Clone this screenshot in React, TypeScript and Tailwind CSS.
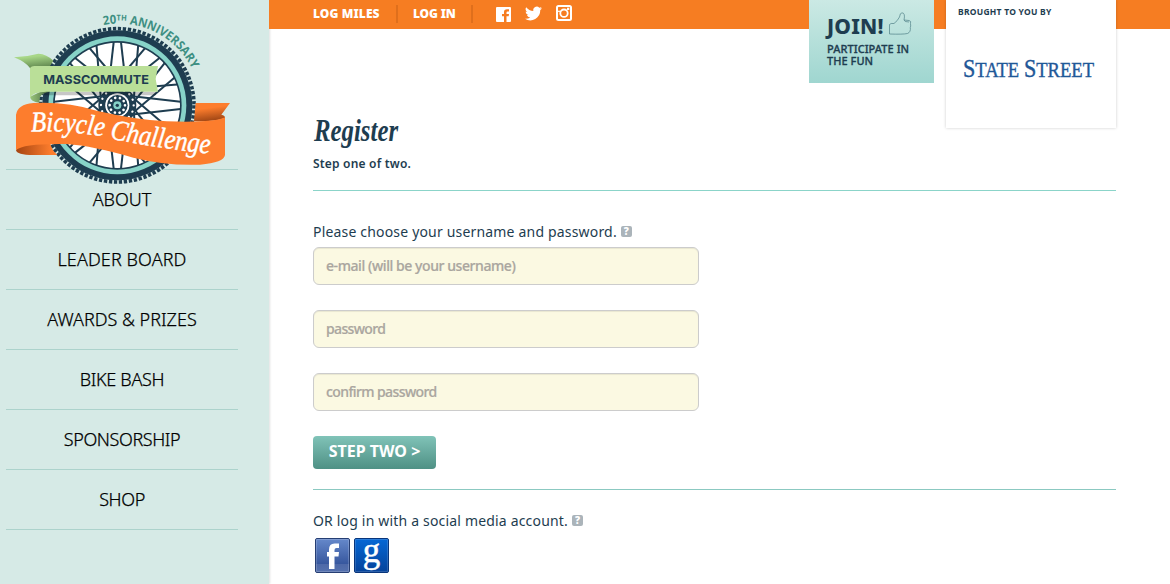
import React from "react";

const nav = [
  { label: "ABOUT", cls: "" },
  { label: "LEADER BOARD", cls: "tracking-[0.1px]" },
  { label: "AWARDS & PRIZES", cls: "" },
  { label: "BIKE BASH", cls: "tracking-[-0.3px]" },
  { label: "SPONSORSHIP", cls: "tracking-[-0.4px]" },
  { label: "SHOP", cls: "tracking-[-0.4px]" },
];

const polar = (r: number, deg: number) => {
  const a = (deg * Math.PI) / 180;
  return [r * Math.cos(a), r * Math.sin(a)];
};

function Wheel() {
  const spokes = Array.from({ length: 32 }, (_, i) => {
    const pair = Math.floor(i / 2);
    const side = i % 2 ? 1 : -1;
    const centre = pair * 22.5;
    const [x1, y1] = polar(190, centre + side * 3.3);
    const [x2, y2] = polar(48, centre + side * (pair % 2 ? -80 : 36));
    return <line key={i} x1={x1} y1={y1} x2={x2} y2={y2} />;
  });
  return (
    <g transform="translate(352 316)">
      <circle r="225" fill="#1e3d50" />
      <circle r="230" fill="none" stroke="#1e3d50" strokeWidth="11" strokeDasharray="10 5.05" />
      <circle r="207" fill="#87d3c8" />
      <circle r="193" fill="#1e3d50" />
      <circle r="188" fill="#fff" />
      <g stroke="#1e3d50" strokeWidth="6">{spokes}</g>
      <circle r="46" fill="none" stroke="#1e3d50" strokeWidth="22" />
      <circle r="49" fill="none" stroke="#fff" strokeWidth="7" strokeDasharray="0.1 19.14" strokeLinecap="round" />
      <circle r="36" fill="#fff" />
      <circle r="31" fill="#1e3d50" />
      <circle r="23" fill="none" stroke="#fff" strokeWidth="8" strokeDasharray="0.1 14.35" strokeLinecap="round" />
      <circle r="12" fill="#87d3c8" />
      <circle r="5" fill="#1e3d50" />
    </g>
  );
}

function Logo() {
  return (
    <svg width="240" height="190" viewBox="0 0 720 570" className="block shrink-0">
      <defs>
        <linearGradient id="tail" x1="0" y1="0" x2="0.3" y2="1">
          <stop offset="0.3" stopColor="#a8d787" />
          <stop offset="1" stopColor="#658c52" />
        </linearGradient>
        <linearGradient id="fold" x1="0" y1="0" x2="1" y2="0">
          <stop offset="0" stopColor="#9bc77c" />
          <stop offset="1" stopColor="#47663f" />
        </linearGradient>
        <linearGradient id="left" x1="0" y1="0" x2="1" y2="0">
          <stop offset="0" stopColor="#a54411" />
          <stop offset="0.85" stopColor="#fd7d2d" />
        </linearGradient>
        <linearGradient id="right" x1="0.7" y1="0.2" x2="0.9" y2="1">
          <stop offset="0" stopColor="#fd7d2d" />
          <stop offset="1" stopColor="#8f3c10" />
        </linearGradient>
        <path id="arc" d="M 311 75 A 245 245 0 0 1 582 219" />
        <path id="wave" d="M 94 395 Q 200 390 310 410 Q 450 443 650 463" />
      </defs>
      <Wheel />
      <text fill="#3d8f82" fontFamily="Open Sans" fontWeight="700" fontSize="37">
        <textPath href="#arc" textLength="318" lengthAdjust="spacingAndGlyphs">
          20<tspan fontSize="24" dy="-9">TH</tspan>
          <tspan dy="9"> ANNIVERSARY</tspan>
        </textPath>
      </text>
      <path fill="url(#tail)" d="M42 172 Q82 170 115 161 Q140 162 160 182 L150 198 L92 206 Q76 185 42 172Z" />
      <path fill="#000" opacity=".22" d="M130 275H468V286H130Z" />
      <path fill="url(#fold)" d="M90 290 Q92 305 118 308 L120 290 Q128 278 150 275 L128 272Z" />
      <path fill="#badf98" d="M90 206 Q91 198 104 198 H474 L467 237 L474 275 H140 Q98 275 90 293Z" />
      <text x="130" y="251" textLength="317" lengthAdjust="spacingAndGlyphs" fill="#1e3d50" fontFamily="Inter" fontWeight="700" fontSize="37">MASSCOMMUTE</text>
      <path fill="url(#left)" d="M48 450 Q50 465 100 465 H172 Q155 450 150 428 H70Z" />
      <path fill="url(#right)" d="M587 309 H690 L664 344 Q676 346 675 354 Q640 366 582 363Z" />
      <path fill="#fd7d2d" d="M48 345 Q52 313 100 309 Q200 304 290 332 Q400 358 500 364 Q640 369 675 352 V465 Q672 488 600 494 Q500 498 400 473 Q280 438 200 432 Q70 430 48 450Z" />
      <text fill="#fff" fontFamily="Liberation Serif" fontStyle="italic" fontSize="86" stroke="#fff" strokeWidth="1.5">
        <textPath href="#wave" textLength="540" lengthAdjust="spacingAndGlyphs">Bicycle Challenge</textPath>
      </text>
    </svg>
  );
}

function Help() {
  return (
    <span className="flex h-[11px] w-[11px] items-center justify-center rounded-[2px] bg-[#abb4ba] text-[10px] leading-none font-black text-white">?</span>
  );
}

function Field({ placeholder, type, cls }: { placeholder: string; type: string; cls: string }) {
  return (
    <input
      type={type}
      placeholder={placeholder}
      className={`block h-[38px] w-[386px] rounded-md border border-[#cccccc] bg-[#fbf9e2] px-3 pb-px text-[14px] font-medium shadow-[inset_0_1px_1px_rgba(0,0,0,0.075)] outline-none placeholder:text-[#aaa69f] placeholder:[-webkit-text-stroke:0.2px_#aaa69f] ${cls}`}
    />
  );
}

export default function App() {
  return (
    <div className="flex h-[584px] w-[1170px] overflow-hidden bg-white font-['Noto_Sans',sans-serif] text-[#1e3d50]">
      <aside className="w-[269px] shrink-0 bg-[#d6eae6] shadow-[1px_0_2px_rgba(0,0,0,0.12)]">
        <div className="relative z-10 h-[169px]">
          <Logo />
        </div>
        <nav className="ml-[6px] w-[232px] border-t border-[#acd3cc]">
          {nav.map((n) => (
            <a key={n.label} className={`flex h-[60px] items-center justify-center border-b border-[#acd3cc] pb-px text-[18px] font-light text-black [-webkit-text-stroke:0.25px_black] ${n.cls}`}>
              {n.label}
            </a>
          ))}
        </nav>
      </aside>

      <main className="flex min-w-0 flex-1 flex-col">
        <header className="flex h-[29px] items-start bg-[#f67d22] pl-[44px] pr-[54px]">
          <div className="flex h-[28px] flex-1 items-center text-[12px] font-black text-white">
            <a className="w-[83px] tracking-[0.1px]">LOG MILES</a>
            <span className="h-[18px] w-[2px] bg-[#df6f1c]" />
            <a className="ml-[15px] w-[58px] tracking-[-0.15px]">LOG IN</a>
            <span className="h-[18px] w-[2px] bg-[#df6f1c]" />
            <svg className="ml-[23px]" width="15" height="15" viewBox="0 0 15 15">
              <path fill="#fff" d="M1 0H14Q15 0 15 1V14Q15 15 14 15H10.5V9.3H12.7L13 7H10.5V5.5Q10.5 4.5 11.6 4.5H13V2.3H11Q8 2.3 8 5V7H6V9.3H8V15H1Q0 15 0 14V1Q0 0 1 0Z" />
            </svg>
            <svg className="mb-[2px] ml-[14px]" width="17" height="17" viewBox="0 0 24 24" fill="#fff">
              <path d="M24 4.6a10 10 0 0 1-2.8.8 5 5 0 0 0 2.1-2.7c-1 .6-2 1-3.1 1.2a4.9 4.9 0 0 0-8.4 4.5A14 14 0 0 1 1.7 3.1a4.9 4.9 0 0 0 1.5 6.6c-.8 0-1.6-.2-2.2-.6a5 5 0 0 0 3.9 4.9c-.7.2-1.5.2-2.2.1a4.9 4.9 0 0 0 4.6 3.4A9.9 9.9 0 0 1 0 19.5 14 14 0 0 0 21.5 7.1 10 10 0 0 0 24 4.6z" />
            </svg>
            <svg className="mb-[2px] ml-[14px]" width="16" height="16" viewBox="0 0 16 16">
              <rect x="1" y="1" width="14" height="14" rx="1.5" fill="none" stroke="#fff" strokeWidth="2" />
              <path d="M2 6.3H4.5" stroke="#fff" strokeWidth="1.2" />
              <circle cx="8" cy="8.2" r="3.7" fill="none" stroke="#fff" strokeWidth="1.8" />
              <rect x="11" y="2.7" width="2.3" height="2.3" fill="#fff" />
            </svg>
          </div>
          <div className="h-[83px] w-[125px] shrink-0 bg-linear-to-b from-[#cbe9e4] to-[#9fd6d0] pl-[18px] pt-[12px]">
            <div className="flex h-[26px] items-start">
              <span className="w-[62px] text-[21px] leading-[28px] font-extrabold tracking-[0.2px]">JOIN!</span>
              <svg width="23" height="23" viewBox="0 0 23 23" fill="none" stroke="#4f7f86" strokeWidth="0.7">
                <path d="M.5 12.5 Q1.5 11 5 11.5 Q8.5 9 10.5 5 Q11 .8 13 .8 Q16.5 1 15 8 L20 8.5 Q22.5 9 21.5 11.5 Q22 14.5 21.3 15.5 Q22 20 18.5 21.5 Q14 22.5 .5 22 Z M15 8 Q15 10 20 10" />
              </svg>
            </div>
            <p className="mt-[5px] text-[11px] leading-[12px] font-medium tracking-[0.05px] [-webkit-text-stroke:0.3px_#1e3d50]">
              PARTICIPATE IN
              <br />
              THE FUN
            </p>
          </div>
          <div className="ml-[12px] h-[128px] w-[170px] shrink-0 bg-white pl-[12px] pt-[6px] shadow-[0_0_3px_rgba(0,0,0,0.2)]">
            <p className="text-[8.5px] leading-[12px] font-bold tracking-[0.25px] whitespace-nowrap">BROUGHT TO YOU BY</p>
            <svg className="mt-[35px] ml-[5px] block overflow-visible" width="140" height="34" viewBox="0 0 140 34">
              <text x="0" y="24" textLength="131" lengthAdjust="spacingAndGlyphs" fill="#1f5898" stroke="#1f5898" strokeWidth="0.4" fontFamily="Liberation Serif" fontSize="21">
                <tspan fontSize="25">S</tspan>TATE <tspan fontSize="25">S</tspan>TREET
              </text>
            </svg>
          </div>
        </header>

        <section className="flex flex-col pl-[44px] pr-[54px]">
          <h1 className="mt-[84px] h-[37px] pl-px font-['Liberation_Serif',serif] text-[31px] leading-[36px] font-bold italic">
            <span className="inline-block origin-left scale-x-[0.8]">Register</span>
          </h1>
          <p className="mt-[5px] h-[20px] text-[12px] leading-[18px] font-semibold tracking-[0.2px]">Step one of two.</p>
          <hr className="mt-[15px] border-[#8bd4c9]" />
          <div className="mt-[30px] flex h-[20px] items-center gap-[4px] text-[14px] tracking-[0.18px]">
            <span>Please choose your username and password.</span>
            <Help />
          </div>
          <div className="mt-[6px] flex flex-col gap-[25px]">
            <Field type="text" placeholder="e-mail (will be your username)" cls="tracking-[-0.43px]" />
            <Field type="password" placeholder="password" cls="tracking-[-0.65px]" />
            <Field type="password" placeholder="confirm password" cls="tracking-[-0.6px]" />
          </div>
          <button className="mt-[25px] h-[33px] w-[123px] rounded-[4px] bg-linear-to-b from-[#80c3b8] to-[#4f9185] pb-[4px] text-[16px] leading-none font-bold whitespace-nowrap text-white">
            STEP TWO &gt;
          </button>
          <hr className="mt-[20px] border-[#8bc9c1]" />
          <div className="mt-[20px] flex h-[20px] items-center gap-[4px] text-[14px] tracking-[0.18px]">
            <span>OR log in with a social media account.</span>
            <Help />
          </div>
          <div className="mt-[8px] ml-[2px] flex gap-[4px]">
            <svg width="35" height="35" viewBox="0 0 35 35">
              <defs>
                <linearGradient id="fb" x1="0" y1="0" x2="0" y2="1">
                  <stop offset="0" stopColor="#6689cb" />
                  <stop offset=".75" stopColor="#37579e" />
                  <stop offset=".76" stopColor="#4e69a8" />
                  <stop offset="1" stopColor="#5571ae" />
                </linearGradient>
              </defs>
              <rect x=".5" y=".5" width="34" height="34" rx="1.5" fill="url(#fb)" stroke="#263e73" />
              <rect x="1.5" y="1.5" width="32" height="32" fill="none" stroke="#fff" opacity=".18" />
              <path fill="#fff" d="M14 31V18.5H12V14H14V11.5Q14 5.5 19.5 5.5H24V10H21.5Q19.5 10 19.5 12V14H24L23.5 18.5H19.5V31Z" />
            </svg>
            <svg width="35" height="35" viewBox="0 0 35 35" className="overflow-visible">
              <defs>
                <linearGradient id="gg" x1="0" y1="0" x2="0" y2="1">
                  <stop offset="0" stopColor="#0568d6" />
                  <stop offset="1" stopColor="#064299" />
                </linearGradient>
              </defs>
              <rect x=".5" y=".5" width="34" height="34" rx="1.5" fill="url(#gg)" stroke="#08357b" />
              <rect x="1.5" y="1.5" width="32" height="32" fill="none" stroke="#fff" opacity=".15" />
              <text x="17.5" y="23.5" textAnchor="middle" fill="#fff" stroke="#fff" strokeWidth="0.5" fontFamily="Liberation Serif" fontSize="35">g</text>
            </svg>
          </div>
        </section>
      </main>
    </div>
  );
}
